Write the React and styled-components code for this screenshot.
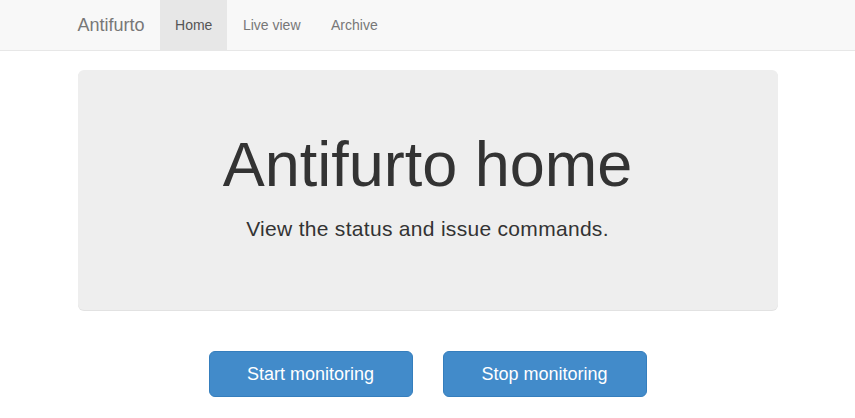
import styled, { createGlobalStyle } from "styled-components";

const GlobalStyle = createGlobalStyle`
  * { box-sizing: border-box; }
  body {
    margin: 0;
    font-family: "Liberation Sans", Arial, sans-serif;
    font-size: 14px;
    line-height: 1.42857;
    color: #333;
    background: #fff;
  }
`;

const links = ["Home", "Live view", "Archive"];

function App() {
  return (
    <>
      <GlobalStyle />
      <Navbar>
        <Container>
          <Brand href="#">Antifurto</Brand>
          <Nav>
            {links.map((link) => (
              <NavLink key={link} href="#" $active={link === "Home"}>
                {link}
              </NavLink>
            ))}
          </Nav>
        </Container>
      </Navbar>

      <Container>
        <Jumbotron>
          <Heading>Antifurto home</Heading>
          <Lead>View the status and issue commands.</Lead>
        </Jumbotron>

        <Actions>
          <Button>Start monitoring</Button>
          <Button>Stop monitoring</Button>
        </Actions>
      </Container>
    </>
  );
}

const Navbar = styled.nav`
  height: 51px;
  background-color: #f8f8f8;
  border-bottom: 1px solid #e7e7e7;
  margin-bottom: 19px;
`;

const Container = styled.div`
  width: 700px;
  margin: 0 auto;
  display: flex;
  flex-direction: column;

  ${Navbar} & {
    flex-direction: row;
    height: 50px;
  }
`;

const Brand = styled.a`
  display: block;
  height: 50px;
  padding: 15px 15px 15px 0;
  font-size: 18px;
  line-height: 20px;
  color: #777;
  text-decoration: none;
`;

const Nav = styled.div`
  display: flex;
`;

const NavLink = styled.a`
  display: block;
  padding: 15px 15px 15px 15.5px;
  line-height: 20px;
  font-size: 14px;
  text-decoration: none;
  color: ${({ $active }) => ($active ? "#555" : "#777")};
  background-color: ${({ $active }) => ($active ? "#e7e7e7" : "transparent")};
`;

const Jumbotron = styled.section`
  background-color: #eee;
  border-radius: 6px;
  box-shadow: 0 1px 0 #e2e2e2;
  padding: 48px 60px;
  margin-bottom: 30px;
  text-align: center;
`;

const Heading = styled.h1`
  margin: 12px 0 15px;
  font-size: 63px;
  font-weight: 500;
  line-height: 1.1;
`;

const Lead = styled.p`
  margin: 0 0 18px;
  font-size: 21px;
  font-weight: 200;
  letter-spacing: 0.3px;
  line-height: 30px;
`;

const Actions = styled.div`
  display: flex;
  justify-content: center;
  gap: 30px;
  padding-top: 11px;
`;

const Button = styled.button`
  width: 204px;
  padding: 10px 16px;
  font-family: inherit;
  font-size: 18px;
  line-height: 24px;
  color: #fff;
  background-color: #428bca;
  border: 1px solid #357ebd;
  border-radius: 6px;
  cursor: pointer;
`;

export default App;
